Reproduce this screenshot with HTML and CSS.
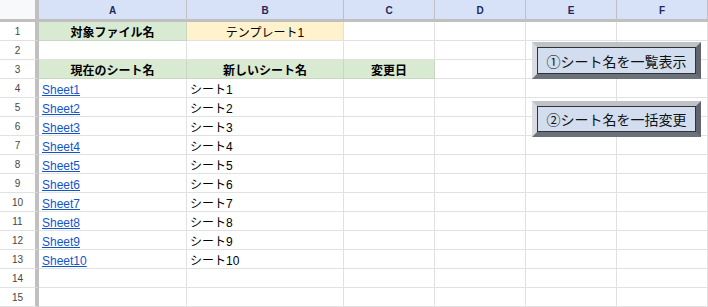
FILE: index.html
```html
<!DOCTYPE html>
<html lang="ja">
<head>
    <meta charset="UTF-8">
    <title>シート名変更</title>
    <link rel="stylesheet" href="styles.css">
</head>
<body>
    <!-- シート本体 -->
    <div class="sheet">
        <div class="grid">
            <!-- 列ヘッダー -->
            <div class="corner"></div>
            <div class="col-head">A</div>
            <div class="col-head">B</div>
            <div class="col-head">C</div>
            <div class="col-head">D</div>
            <div class="col-head">E</div>
            <div class="col-head">F</div>

            <!-- 1行目 -->
            <div class="row-head">1</div>
            <div class="cell green bold center">対象ファイル名</div>
            <div class="cell yellow center">テンプレート1</div>
            <div class="cell"></div><div class="cell"></div><div class="cell"></div><div class="cell"></div>

            <!-- 2行目 -->
            <div class="row-head">2</div>
            <div class="cell"></div><div class="cell"></div><div class="cell"></div><div class="cell"></div><div class="cell"></div><div class="cell"></div>

            <!-- 3行目 -->
            <div class="row-head">3</div>
            <div class="cell green bold center">現在のシート名</div>
            <div class="cell green bold center">新しいシート名</div>
            <div class="cell green bold center">変更日</div>
            <div class="cell"></div><div class="cell"></div><div class="cell"></div>

            <div class="row-head">4</div>
            <div class="cell"><a href="#">Sheet1</a></div><div class="cell">シート1</div>
            <div class="cell"></div><div class="cell"></div><div class="cell"></div><div class="cell"></div>

            <div class="row-head">5</div>
            <div class="cell"><a href="#">Sheet2</a></div><div class="cell">シート2</div>
            <div class="cell"></div><div class="cell"></div><div class="cell"></div><div class="cell"></div>

            <div class="row-head">6</div>
            <div class="cell"><a href="#">Sheet3</a></div><div class="cell">シート3</div>
            <div class="cell"></div><div class="cell"></div><div class="cell"></div><div class="cell"></div>

            <div class="row-head">7</div>
            <div class="cell"><a href="#">Sheet4</a></div><div class="cell">シート4</div>
            <div class="cell"></div><div class="cell"></div><div class="cell"></div><div class="cell"></div>

            <div class="row-head">8</div>
            <div class="cell"><a href="#">Sheet5</a></div><div class="cell">シート5</div>
            <div class="cell"></div><div class="cell"></div><div class="cell"></div><div class="cell"></div>

            <div class="row-head">9</div>
            <div class="cell"><a href="#">Sheet6</a></div><div class="cell">シート6</div>
            <div class="cell"></div><div class="cell"></div><div class="cell"></div><div class="cell"></div>

            <div class="row-head">10</div>
            <div class="cell"><a href="#">Sheet7</a></div><div class="cell">シート7</div>
            <div class="cell"></div><div class="cell"></div><div class="cell"></div><div class="cell"></div>

            <div class="row-head">11</div>
            <div class="cell"><a href="#">Sheet8</a></div><div class="cell">シート8</div>
            <div class="cell"></div><div class="cell"></div><div class="cell"></div><div class="cell"></div>

            <div class="row-head">12</div>
            <div class="cell"><a href="#">Sheet9</a></div><div class="cell">シート9</div>
            <div class="cell"></div><div class="cell"></div><div class="cell"></div><div class="cell"></div>

            <div class="row-head">13</div>
            <div class="cell"><a href="#">Sheet10</a></div><div class="cell">シート10</div>
            <div class="cell"></div><div class="cell"></div><div class="cell"></div><div class="cell"></div>

            <div class="row-head">14</div>
            <div class="cell"></div><div class="cell"></div><div class="cell"></div><div class="cell"></div><div class="cell"></div><div class="cell"></div>

            <div class="row-head">15</div>
            <div class="cell"></div><div class="cell"></div><div class="cell"></div><div class="cell"></div><div class="cell"></div><div class="cell"></div>
        </div>

        <!-- シート上の図形ボタン -->
        <button class="macro-btn btn-list"><span class="face">①シート名を一覧表示</span></button>
        <button class="macro-btn btn-rename"><span class="face">②シート名を一括変更</span></button>
    </div>
</body>
</html>
```

FILE: styles.css
```css
* {
    margin: 0;
    padding: 0;
    box-sizing: border-box;
}

body {
    background: #ffffff;
    font-family: "Liberation Sans", Arial, "Noto Sans CJK JP", sans-serif;
    font-size: 12px;
    color: #000000;
}

.sheet {
    position: relative;
    width: 708px;
    height: 307px;
    overflow: hidden;
}

.grid {
    display: grid;
    grid-template-columns: 39px 148px 157px 91px 91px 91px 91px;
    grid-template-rows: 22px repeat(15, 19px);
}

/* 左上の角 */
.corner {
    background: #f8f9fa;
    border-right: 4px solid #c0c0c0;
    border-bottom: 3px solid #c0c0c0;
}

/* 列ヘッダー */
.col-head {
    background: #d7e2f9;
    border-right: 1px solid #c0c0c0;
    border-bottom: 3px solid #c0c0c0;
    display: flex;
    align-items: center;
    justify-content: center;
    font-size: 10px;
    font-weight: 700;
    color: #1f2a5a;
    padding-top: 1px;
}

/* 行番号 */
.row-head {
    background: #ffffff;
    border-right: 4px solid #c0c0c0;
    border-bottom: 1px solid #e1e1e1;
    display: flex;
    align-items: center;
    justify-content: center;
    font-size: 10px;
    color: #444746;
    padding-top: 1px;
}

.cell {
    border-right: 1px solid #e1e1e1;
    border-bottom: 1px solid #e1e1e1;
    display: flex;
    align-items: flex-end;
    padding: 0 3px;
    line-height: 14px;
    white-space: nowrap;
    overflow: hidden;
}

.cell a {
    color: #1155cc;
    text-decoration: underline;
}

.green {
    background: #d9ead3;
    border-right-color: #c8d6c2;
    border-bottom-color: #c8d6c2;
}

.yellow {
    background: #fff2cc;
}

.bold {
    font-weight: 700;
}

.center {
    justify-content: center;
}

/* 図形ボタン（シートの上に重なる） */
.macro-btn {
    position: absolute;
    left: 532px;
    width: 169px;
    display: flex;
    padding: 0;
    border: 5px solid;
    border-color: #bfc3c8 #5e656d #6b7279 #d9dce0;
    box-shadow: 0 0 0 1px #2e2e2e inset;
    background: #2e2e2e;
    cursor: pointer;
    font-family: "Liberation Sans", Arial, "Noto Sans CJK JP", sans-serif;
}

.btn-list {
    top: 42px;
    height: 37px;
}

.btn-rename {
    top: 101px;
    height: 36px;
}

.macro-btn .face {
    flex: 1;
    display: flex;
    align-items: center;
    justify-content: center;
    background: #d2deef;
    border: 1px solid #333333;
    font-size: 14px;
    color: #111111;
}
```
